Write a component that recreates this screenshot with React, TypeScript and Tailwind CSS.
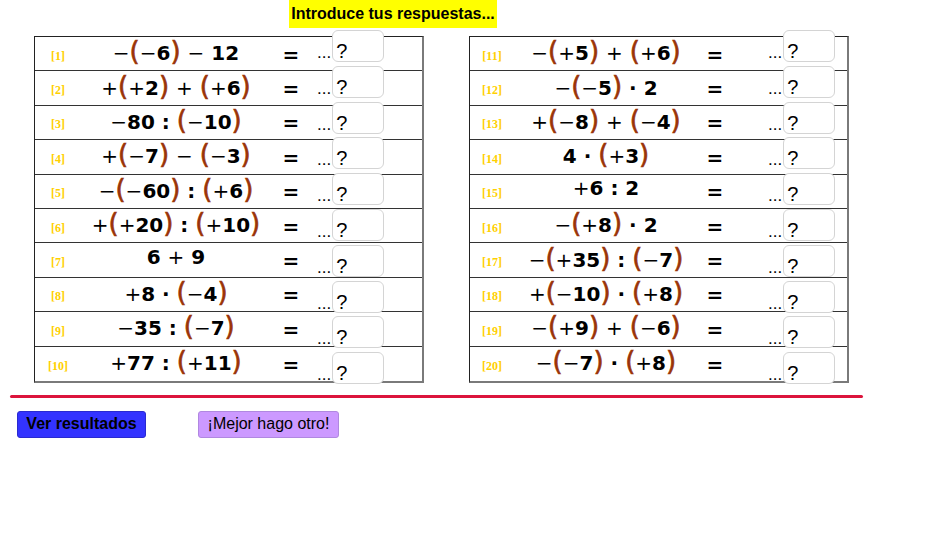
import React from "react";

const left = [
  "−(−6) − 12",
  "+(+2) + (+6)",
  "−80 : (−10)",
  "+(−7) − (−3)",
  "−(−60) : (+6)",
  "+(+20) : (+10)",
  "6 + 9",
  "+8 · (−4)",
  "−35 : (−7)",
  "+77 : (+11)",
];

const right = [
  "−(+5) + (+6)",
  "−(−5) · 2",
  "+(−8) + (−4)",
  "4 · (+3)",
  "+6 : 2",
  "−(+8) · 2",
  "−(+35) : (−7)",
  "+(−10) · (+8)",
  "−(+9) + (−6)",
  "−(−7) · (+8)",
];

function Expr({ text }: { text: string }) {
  const parts = text.split(/([()+−])/).filter((p) => p !== "");
  return (
    <span className="whitespace-pre font-['DejaVu_Sans',sans-serif] text-[20px] font-bold text-black leading-none">
      {parts.map((p, i) =>
        p === "(" || p === ")" ? (
          <span key={i} className="text-[#9a3408] text-[26px] font-normal [-webkit-text-stroke:0.6px_#9a3408]">
            {p}
          </span>
        ) : p === "+" || p === "−" ? (
          <span key={i} className="font-normal">
            {p}
          </span>
        ) : (
          <span key={i}>{p}</span>
        )
      )}
    </span>
  );
}

function Answer() {
  return (
    <div className="flex items-baseline h-[32px]">
      <span className="text-[17px] leading-none mr-[1px] font-['Liberation_Sans',sans-serif]">...</span>
      <div className="w-[52px] h-[32px] bg-white border border-[#d4d4d4] rounded-[6px] pl-[3px] pt-[10px] text-[20px] leading-[20px] font-['Liberation_Sans',sans-serif] text-black">
        ?
      </div>
    </div>
  );
}

function Table({
  items,
  start,
  cols,
  width,
}: {
  items: string[];
  start: number;
  cols: string;
  width: string;
}) {
  return (
    <div className={`${width} border-l border-t border-[#222] border-r-2 border-b-2 border-r-[#7a7a7a] border-b-[#7a7a7a] bg-white`}>
      {items.map((e, i) => (
        <div
          key={i}
          className={`grid ${cols} items-center h-[34.4px] ${i < items.length - 1 ? "border-b border-[#333]" : ""}`}
        >
          <span className="text-center text-[12px] font-bold text-[#ffd000] font-['Liberation_Serif',serif] pt-[4px]">
            [{start + i}]
          </span>
          <span className="text-center pb-[2px]">
            <Expr text={e} />
          </span>
          <span className="text-center font-['DejaVu_Sans',sans-serif] text-[20px] font-bold pt-[2px]">=</span>
        </div>
      ))}
    </div>
  );
}

export default function App() {
  return (
    <div className="relative w-[932px] h-[535px] bg-white font-['Liberation_Sans',sans-serif] overflow-hidden">
      <div className="flex justify-start pl-[289px]">
        <div className="w-[208px] h-[28px] bg-[#ffff00] flex items-center justify-center text-[16px] font-bold text-black">
          Introduce tus respuestas...
        </div>
      </div>

      <div className="flex mt-[8px] pl-[34px]">
        <Table items={left} start={1} cols="grid-cols-[46px_190px_40px]" width="w-[390px]" />
        <div className="ml-[45px]">
          <Table items={right} start={11} cols="grid-cols-[44px_184px_34px]" width="w-[380px]" />
        </div>
      </div>

      <div className="absolute left-[317px] top-[30px] flex flex-col gap-[3.8px]">
        {left.map((_, i) => (
          <Answer key={i} />
        ))}
      </div>
      <div className="absolute left-[768px] top-[30px] flex flex-col gap-[3.8px]">
        {right.map((_, i) => (
          <Answer key={i} />
        ))}
      </div>

      <div className="ml-[10px] mt-[12px] w-[853px] h-[3px] rounded-full bg-[#dc143c]" />

      <div className="flex mt-[13px] pl-[17px] gap-[52px]">
        <button className="w-[129px] h-[27px] bg-[#3333ff] border border-[#2a2ad0] rounded-[3px] text-[16px] font-bold text-black">
          Ver resultados
        </button>
        <button className="w-[141px] h-[27px] bg-[#cc99ff] border border-[#b088e0] rounded-[3px] text-[16px] text-black">
          ¡Mejor hago otro!
        </button>
      </div>
    </div>
  );
}
